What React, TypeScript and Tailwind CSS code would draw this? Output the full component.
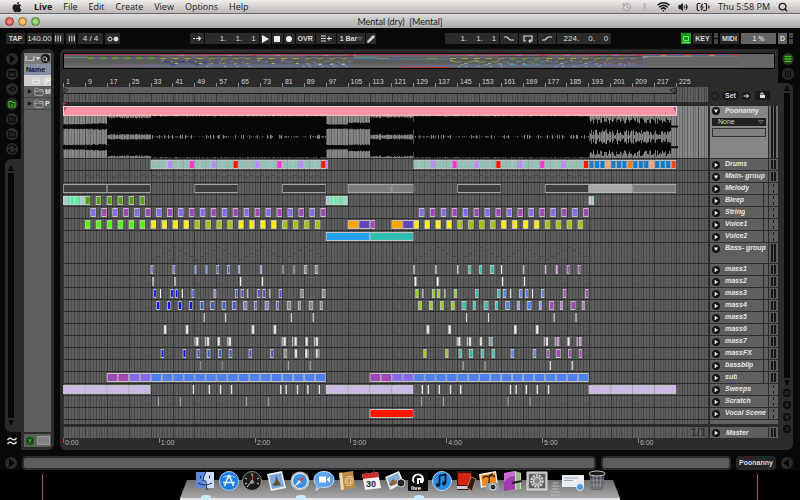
import type { ReactNode } from "react";
import { FaApple } from "react-icons/fa";
import {
  BatteryCharging,
  Bluetooth,
  FolderClosed,
  History,
  Pencil,
  Search,
  Volume2,
  Wifi,
} from "lucide-react";

// [start bar, length in bars, fill, outline]
type Clip = [number, number, string, string?];

type Track = {
  name: string;
  clips: Clip[];
  kind?: "group" | "child";
  mono?: boolean;
  ghost?: number;
};

const BARS = 235.6;
const LANE_W = 645;
const PX = LANE_W / BARS;

const TEAL = "#8cc2b8";
const VIOLET = "#866cec";
const PURPLE = "#a049b6";
const YELLOW = "#fff000";
const OLIVE = "#a9c000";
const BLUE = "#5181ee";
const NAVY = "#0a14f0";
const STEEL = "#3c5fb8";
const GREEN = "#93d11e";
const AQUA = "#35bfb0";
const WHITE = "#f4f4f4";
const GREY = "#8a8a8a";
const LAVENDER = "#cab9e5";

const every = (
  from: number,
  to: number,
  step: number,
  len: number,
  fills: string[],
  outline?: string,
): Clip[] => {
  const out: Clip[] = [];
  for (let b = from, i = 0; b < to; b += step, i++) {
    out.push([b, len, fills[i % fills.length], outline]);
  }
  return out;
};

const at = (fill: string, len: number, ...starts: number[]): Clip[] =>
  starts.map((s) => [s, len, fill]);

const drumLoop = [
  TEAL, TEAL, TEAL, "#b58cff",
  TEAL, TEAL, TEAL, "#ff33d6",
  TEAL, TEAL, TEAL, "#b58cff",
  TEAL, TEAL, TEAL, "#ff1700",
];
const DB = "#157bc8";
const drumEnd = [
  DB, DB, DB, "#ffa670", DB, DB, DB, "#ff7a00",
  DB, DB, DB, "#ffa670", DB, DB, DB, "#e94a1b",
];
const mint = ["#b9bfe6", "#8fd8c0", "#6feeb0", "#48f09a", "#5cf0a6", "#3ff090"];
const MINT_EDGE = "#c4f7e0";

const tracks: Track[] = [
  {
    name: "Drums",
    clips: [
      ...every(32, 96, 2, 2, drumLoop),
      [96, 0.8, "#b58cff"],
      ...every(128, 192, 2, 2, drumLoop),
      ...every(192, 224, 2, 2, drumEnd),
    ],
  },
  { name: "Main- group", clips: [], kind: "group", ghost: 12 },
  {
    name: "Melody",
    kind: "child",
    mono: true,
    clips: [
      ...[0, 16, 48, 80, 144, 176].map((b): Clip => [b, 16, "#3e3e3e", "#b0b0b0"]),
      [104, 16, "#7d7d7d", "#b4b4b4"],
      [120, 8, "#7d7d7d", "#b4b4b4"],
      [192, 16, "#a9a9a9", "#c8c8c8"],
      [208, 16, "#7d7d7d", "#b4b4b4"],
    ],
  },
  {
    name: "Bleep",
    kind: "child",
    mono: true,
    clips: [
      ...every(0, 8, 1, 1, mint, MINT_EDGE),
      ...every(8, 32, 4, 1.9, ["#5a9f08"]),
      ...every(96, 104, 1, 1, mint, MINT_EDGE),
      [192, 1, "#cdd3ee"],
      [193, 1, "#a4cfc0"],
    ],
  },
  {
    name: "String",
    kind: "child",
    mono: true,
    clips: [
      ...every(10, 96, 4, 2, [VIOLET, PURPLE]),
      ...every(130, 192, 4, 2, [VIOLET, PURPLE]),
    ],
  },
  {
    name: "Voice1",
    kind: "child",
    mono: true,
    clips: [
      ...every(8, 32, 4, 2, ["#50ff00"]),
      ...every(32, 48, 4, 2, [YELLOW]),
      ...every(48, 64, 4, 2, [OLIVE]),
      ...every(64, 80, 4, 2, [YELLOW]),
      ...every(80, 96, 4, 2, [OLIVE]),
      [104, 4, "#ffa400"],
      [108, 4, "#5f46b4"],
      [112, 2, PURPLE],
      [120, 4, "#ffa400"],
      [124, 4, "#5f46b4"],
      ...every(128, 144, 4, 2, [YELLOW]),
      ...every(144, 160, 4, 2, [OLIVE]),
      ...every(160, 176, 4, 2, [YELLOW]),
      ...every(176, 192, 4, 2, [OLIVE]),
    ],
  },
  {
    name: "Voice2",
    kind: "child",
    mono: true,
    clips: [
      [96, 16, "#24a3f5"],
      [112, 16, "#30beb1"],
    ],
  },
  { name: "Bass- group", clips: [], kind: "group", ghost: 21 },
  {
    name: "mass1",
    kind: "child",
    clips: [
      ...at("#6a66d8", 1, 32, 40),
      ...at("#8fa3d6", 0.8, 48, 52),
      ...at(STEEL, 1, 56, 60),
      ...at("#b7aede", 0.7, 64, 72),
      ...at(GREY, 0.8, 80, 84),
      ...at(GREY, 1.2, 88, 92),
      ...at(WHITE, 0.4, 128, 136, 144, 160),
      ...at(AQUA, 1.1, 148, 152),
      ...at(AQUA, 1.5, 156),
      ...at("#c0c0c0", 0.5, 168, 176),
      ...at("#d9a9e0", 0.7, 180),
      ...at(PURPLE, 1, 184, 188),
    ],
  },
  {
    name: "mass2",
    kind: "child",
    clips: [
      ...at("#c4c4c4", 0.6, 32.6, 40.6),
      ...at(WHITE, 0.5, 64.6, 72.6, 160.3, 168.3),
      ...at(WHITE, 0.7, 128.4, 136.5),
    ],
  },
  {
    name: "mass3",
    kind: "child",
    clips: [
      ...at(NAVY, 1.1, 33, 39.2, 40.9),
      ...at("#4a4ee0", 1, 47),
      ...at("#7a8fc8", 1, 55),
      ...at(WHITE, 0.4, 35.4, 43.4, 163.3, 171.3),
      ...at(STEEL, 1.1, 62.8),
      ...at("#5b46c4", 1.2, 64.9, 70.9, 72.8, 78.8),
      ...at("#b4b4b4", 0.6, 67.1, 75.2, 131.1, 139.2),
      ...at(GREY, 1.3, 86.7, 94.6),
      ...at(GREEN, 1.2, 128.7, 134.8, 136.6, 142.8),
      ...at(AQUA, 1.3, 150.5, 158.5),
      ...at(BLUE, 1.2, 160.7, 166.6, 168.8, 174.6),
      ...at(PURPLE, 1.2, 182.6, 190.7),
    ],
  },
  {
    name: "mass4",
    kind: "child",
    clips: [
      ...at(NAVY, 1.3, 34, 38, 42, 46),
      ...at(STEEL, 1.5, 50, 53.8, 58, 61.8),
      ...at("#8a7bc8", 1.5, 65.8, 73.7),
      ...at("#6656c0", 1.1, 69.8, 77.8),
      ...at(GREY, 1.5, 81.8, 89.8),
      ...at(GREY, 1.1, 85.8, 93.8),
      ...at(GREEN, 1.4, 129.7, 133.7, 137.7, 141.7),
      ...at(AQUA, 1.7, 145.6, 153.7),
      ...at(AQUA, 1.1, 149.7, 157.8),
      ...at(BLUE, 1.7, 161.5, 169.4),
      ...at("#7f9fe8", 1.1, 165.8, 173.8),
      ...at(PURPLE, 1.8, 177.5, 185.4),
      ...at("#b070c0", 1.1, 181.5, 189.5),
    ],
  },
  {
    name: "mass5",
    kind: "child",
    clips: at("#e0e0e0", 0.4, 51.4, 59.2, 83.2, 91.2, 147.2, 155.2, 179.2, 187.2),
  },
  {
    name: "mass6",
    kind: "child",
    clips: at(WHITE, 1, 36.8, 44.8, 68.9, 76.9, 132.8, 140.7, 164.7, 172.7),
  },
  {
    name: "mass7",
    kind: "child",
    clips: [
      ...at("#c4c4c4", 0.4, 48, 51.8, 60, 79.9, 83.7, 91.7, 143.8, 147.5, 155.5, 175.6, 179.6, 187.6),
      ...at(WHITE, 0.9, 48.6, 52.5, 56.4, 60.5, 80.5, 84.5, 88.5, 92.3, 144.3, 148.2, 152.2, 176.3, 184.2),
      ...at(AQUA, 0.9, 156.1),
      ...at("#c887d4", 1, 180.3, 188.4),
    ],
  },
  {
    name: "massFX",
    kind: "child",
    clips: [
      ...at(NAVY, 1.2, 35.7, 43.7),
      ...at(STEEL, 1.3, 48.8, 52.5, 56.6, 60.5),
      ...at("#6a48c8", 1.2, 67.8, 75.7),
      ...at(GREY, 1.3, 80.6),
      ...at(WHITE, 0.9, 84.6, 88.4, 92.3),
      ...at(GREY, 0.8, 89.1, 93),
      ...at(GREEN, 1.2, 131.6, 139.6),
      ...at(AQUA, 1.2, 144.5, 152.6, 156.6),
      ...at(AQUA, 1.6, 148.2),
      ...at(BLUE, 1.2, 163.5, 171.6),
      ...at(PURPLE, 1.2, 176.6, 184.5, 188.4),
      ...at(PURPLE, 1.8, 180),
    ],
  },
  {
    name: "bassblip",
    kind: "child",
    clips: [
      ...at("#8c8c8c", 0.4, 50, 58),
      ...at("#b8b8b8", 0.3, 82.1, 90.1, 146, 154),
      ...at(WHITE, 0.4, 177.8, 185.8),
    ],
  },
  {
    name: "sub",
    kind: "child",
    clips: [
      ...every(16, 32, 4, 4, [PURPLE, PURPLE, VIOLET, VIOLET]),
      ...every(32, 96, 4, 4, [BLUE]),
      ...every(112, 128, 4, 4, [PURPLE, PURPLE, VIOLET, VIOLET]),
      ...every(128, 192, 4, 4, [BLUE]),
    ],
  },
  {
    name: "Sweeps",
    mono: true,
    clips: [
      ...every(0, 32, 8, 8, [LAVENDER]),
      ...at("#e6e6e6", 0.5, 47.4, 53.2, 57.3, 61.3, 79.3, 81.3, 85.4, 89.2, 93.4),
      ...every(96, 128, 8, 8, [LAVENDER]),
      ...at("#e6e6e6", 0.5, 131, 133.2, 137.2, 141.3, 145, 163.2, 165.3, 169, 173, 177.1),
      ...every(192, 224, 8, 8, [LAVENDER]),
    ],
  },
  {
    name: "Scratch",
    mono: true,
    clips: at("#a2a2a2", 0.4, 34.7, 42.7, 66.8, 74.8, 130.8, 138.8, 162.4, 170.4),
  },
  { name: "Vocal Scene", mono: true, clips: [[112, 16, "#ff1500"]] },
];

const gridPath = (h: number, step: number) => {
  let d = "";
  for (let b = 0; b < BARS; b += step) {
    d += `M${Math.round(b * PX) + 0.5} 0V${h}`;
  }
  return d;
};

function Grid({ h, light = false }: { h: number; light?: boolean }) {
  return (
    <g fill="none">
      <rect width={LANE_W} height={h} fill={light ? "#868686" : "#5e5e5e"} />
      <path d={gridPath(h, 1)} stroke={light ? "#727272" : "#4e4e4e"} />
      <path d={gridPath(h, 2)} stroke={light ? "#626262" : "#474747"} />
      <path d={gridPath(h, 8)} stroke={light ? "#4c4c4c" : "#373737"} />
    </g>
  );
}

function ClipShape({ clip }: { clip: Clip }) {
  const [start, len, fill, outline = "#d4d4d4"] = clip;
  const x = start * PX;
  const w = Math.max(len * PX, 1);
  if (w < 2.4) return <rect x={x} y={1} width={w} height={9} fill={fill} />;
  return (
    <>
      <rect x={x} y={1} width={w} height={9} fill={outline} fillOpacity={0.85} />
      <rect x={x + 0.8} y={2} width={w - 1.3} height={7} fill={fill} />
    </>
  );
}

// dim preview of what the folded tracks hold
function Ghost({ h }: { h: number }) {
  const marks = [];
  for (let b = h > 12 ? 32 : 8; b < 192; b += 2) {
    if (b >= 96 && b < 128) continue;
    const y = h > 12 ? 4 + Math.abs(((b / 2) % 8) - 4) * 3 : 4 + ((b / 2) % 2) * 2;
    marks.push(<rect key={b} x={b * PX} y={y} width={4} height={1} />);
  }
  return <g fill="#454545">{marks}</g>;
}

function Lane({ track }: { track: Track }) {
  const h = track.ghost ? track.ghost - 1 : 11;
  return (
    <svg
      viewBox={`0 0 ${LANE_W} ${h}`}
      preserveAspectRatio="none"
      className="block h-full w-full"
      aria-hidden="true"
    >
      <Grid h={h} />
      {track.ghost && <Ghost h={track.ghost} />}
      {track.clips.map((c, i) => (
        <ClipShape key={i} clip={c} />
      ))}
    </svg>
  );
}

const noise = (i: number) => {
  const v = Math.sin(i * 12.9898) * 43758.5453;
  return v - Math.floor(v);
};

// [inner, outer] half-height of the audio at a bar
const loudness = (bar: number, n: number, m: number): [number, number] => {
  if (bar < 8) return [2 + n * 0.6, 2 + n * 0.6];
  if (bar < 16) return [2 + n * 1.4, 2.5 + n];
  if (bar < 32) return [7.6 + n * 1.4, 8.4 + n * 1.6];
  if (bar < 96) return [n > 0.86 ? 8.6 : 9.8 + m, 10.2 + n * 0.8];
  if (bar < 104) return [2 + n * 0.4, 2 + n * 0.4];
  if (bar < 112) return [2 + n, 3.4 + n];
  if (bar < 127.6) return [7.4 + n * 1.6, 8.4 + n * 1.6];
  if (bar < 128) return [3, 5];
  if (bar < 192) return [n > 0.86 ? 8.6 : 9.8 + m, 10.2 + n * 0.8];
  if (bar < 222) return [3 + n * 6, 3 + m * 6];
  return [1, 1];
};

function Waveform() {
  let d = "";
  for (let x = 0; x < 224.5 * PX; x++) {
    const [inner, outer] = loudness(x / PX, noise(x), noise(x + 900));
    d += `M${x + 0.5} ${(21 - outer).toFixed(1)}V${(21 + inner).toFixed(1)}`;
    d += `M${x + 0.5} ${(42 - inner).toFixed(1)}V${(42 + outer).toFixed(1)}`;
  }
  return (
    <svg
      viewBox={`0 0 ${LANE_W} 53`}
      preserveAspectRatio="none"
      className="block h-full w-full"
      aria-hidden="true"
    >
      <Grid h={53} light />
      <path d={d} stroke="#050505" />
      <rect x={0} y={0} width={614} height={10} fill="#e9d3d6" />
      <rect x={1} y={1} width={612} height={8} fill="#fd92a4" />
      <path d="M1 1h3l-3 5zM613 1h-3l3 5z" fill="#a8606c" />
    </svg>
  );
}

function Overview() {
  return (
    <svg
      viewBox={`0 0 ${BARS} 26`}
      preserveAspectRatio="none"
      className="block h-[16px] w-full border border-black bg-[#666]"
      aria-hidden="true"
    >
      <rect width={224} height={1.6} fill="#b4465a" />
      <rect y={4} x={0} width={192} height={14} fill="#5b5b5b" />
      {tracks.map((t, row) => (
        <g key={t.name} opacity={0.65}>
          {t.clips.map(([s, l, fill], i) => (
            <rect
              key={i}
              x={s}
              y={1.6 + row * 1.15}
              width={l}
              height={1.5}
              fill={fill === TEAL || fill === LAVENDER ? "#777" : fill}
            />
          ))}
        </g>
      ))}
    </svg>
  );
}

function Fold({ open = false, label }: { open?: boolean; label: string }) {
  return (
    <button
      type="button"
      aria-label={label}
      className="flex size-[8px] shrink-0 items-center justify-center rounded-full bg-[#141414]"
    >
      <svg viewBox="0 0 8 8" className="size-[8px]" fill="#ececec">
        <path d={open ? "M1.8 2.5h4.4L4 6z" : "M2.7 1.8v4.4L6.2 4z"} />
      </svg>
    </button>
  );
}

function Meter({ mono = false }: { mono?: boolean }) {
  return (
    <div className="flex w-[9px] shrink-0 justify-center gap-px bg-[#5d5d5d] py-px">
      {mono ? (
        <div className="w-px border-l border-dashed border-[#1c1c1c]" />
      ) : (
        <>
          <div className="w-[2px] bg-[#161616]" />
          <div className="w-[2px] bg-[#161616]" />
        </>
      )}
    </div>
  );
}

const trackName = "truncate text-[7px] leading-[10px] font-bold italic text-[#e4e4e4]";

function TrackRow({ track }: { track: Track }) {
  const tall = track.name === "Bass- group";
  return (
    <div className={`flex gap-[2px] ${tall ? "h-[21px]" : "h-[12px]"}`}>
      <div className="min-w-0 flex-1 border-b border-[#2d2d2d]">
        <Lane track={track} />
      </div>
      <div className="flex w-[68px] shrink-0 gap-px border-b border-[#2d2d2d] bg-[#2d2d2d]">
        <div className={`flex min-w-0 flex-1 ${track.kind ? "bg-[#5f5f5f]" : ""}`}>
          <div
            className={`flex min-w-0 flex-1 items-start gap-[5px] bg-[#5f5f5f] pl-[2px] ${
              track.kind === "child" ? "mr-[4px] border-r border-[#2d2d2d]" : ""
            }`}
          >
            <div className="pt-[2px]">
              <Fold open={track.kind === "group"} label={`Unfold ${track.name}`} />
            </div>
            <span className={trackName}>{track.name}</span>
          </div>
        </div>
        <Meter mono={track.mono} />
      </div>
    </div>
  );
}

const box =
  "flex h-[11px] items-center justify-center bg-[#2a2a2a] text-[7px] leading-none font-bold text-[#d8d8d8]";

function Lamp() {
  return (
    <div className="flex w-[4px] flex-col justify-between">
      <div className="h-[5px] bg-[#454545]" />
      <div className="h-[5px] bg-[#454545]" />
    </div>
  );
}

function Glyph({ d, label, w = "w-[18px]" }: { d: string; label: string; w?: string }) {
  return (
    <button type="button" aria-label={label} className={`${box} ${w}`}>
      <svg viewBox="0 0 12 9" className="h-[9px] w-[12px]" fill="none" stroke="#dedede" strokeWidth="1.2">
        <path d={d} />
      </svg>
    </button>
  );
}

function Position({ value }: { value: string[] }) {
  return (
    <div className={`${box} w-[54px] justify-end gap-[9px] pr-[3px] text-[8px] font-normal`}>
      {value.map((v, i) => (
        <span key={i}>{v}</span>
      ))}
    </div>
  );
}

function Chevron() {
  return (
    <svg
      viewBox="0 0 6 4"
      className="pointer-events-none absolute top-1/2 right-[2px] h-[4px] w-[6px] -translate-y-1/2"
      fill="none"
      stroke="#6a6a6a"
      aria-hidden="true"
    >
      <path d="M.5 .5h5L3 3.500z" />
    </svg>
  );
}

function Transport() {
  return (
    <div className="flex h-[21px] shrink-0 items-center justify-between pr-[7px] pl-[6px]">
      <div className="flex gap-[2px]">
        <button type="button" className={`${box} w-[19px]`}>TAP</button>
        <div className={`${box} w-[25px] text-[8px] font-normal`}>140.00</div>
        <Glyph d="M2 1v7M5 1v7M8 1v7" label="Nudge down" w="w-[10px]" />
        <Glyph d="M4 1v7M7 1v7M10 1v7" label="Nudge up" w="w-[10px]" />
        <div className={`${box} w-[25px] text-[8px] font-normal`}>4 / 4</div>
        <button type="button" aria-label="Metronome" className={`${box} w-[15px]`}>
          <svg viewBox="0 0 14 8" className="h-[8px] w-[14px]" stroke="#e2e2e2">
            <circle cx="4" cy="4" r="2" fill="none" />
            <circle cx="10" cy="4" r="2" fill="#e2e2e2" />
          </svg>
        </button>
      </div>
      <div className="flex gap-px">
        <Glyph d="M2 4.500h2M5 4.500h4M7.500 2.500l2 2l-2 2" label="Follow" w="w-[14px]" />
        <Position value={["1.", "1.", "1"]} />
        <button type="button" aria-label="Play" className={`${box} w-[11px]`}>
          <svg viewBox="0 0 8 8" className="size-[8px]" fill="#ececec"><path d="M1 0l7 4l-7 4z" /></svg>
        </button>
        <button type="button" aria-label="Stop" className={`${box} w-[11px]`}>
          <svg viewBox="0 0 8 8" className="size-[8px]" fill="#ececec"><path d="M1 1h6v6H1z" /></svg>
        </button>
        <button type="button" aria-label="Record" className={`${box} w-[11px]`}>
          <svg viewBox="0 0 8 8" className="size-[8px]" fill="#ececec"><circle cx="4" cy="4" r="3" /></svg>
        </button>
        <button type="button" className={`${box} w-[19px]`}>OVR</button>
        <Glyph d="M1 2h5M1 4.500h5M1 7h5M7 4.500h5M9 2.500v4" label="Back to arrangement" w="w-[20px]" />
        <div className="relative">
          <select aria-label="Quantize" className={`${box} w-[28px] appearance-none pl-[3px]`} defaultValue="1 Bar">
            <option>1 Bar</option>
          </select>
          <Chevron />
        </div>
        <button type="button" aria-label="Draw" className={`${box} w-[10px]`}>
          <Pencil size={8} strokeWidth={3} fill="#d8d8d8" />
        </button>
      </div>
      <div className="flex gap-px">
        <Position value={["1.", "1.", "1"]} />
        <Glyph d="M1 3h3l3 3h4" label="Punch in" />
        <Glyph d="M4 7H2V2h8v5H7M8.500 5.500L7 7l1.500 1.500" label="Loop" />
        <Glyph d="M1 6h3l3-3h4" label="Punch out" />
        <Position value={["224.", "0.", "0"]} />
      </div>
      <div className="flex gap-[2px]">
        <button type="button" aria-label="Computer keyboard" className="flex h-[11px] w-[10px] items-center justify-center bg-[#0f9c12]">
          <svg viewBox="0 0 8 8" className="size-[8px]" fill="none" stroke="#7fe07c"><path d="M1.500 1.500h5v4h-5zM0 7.500h8" /></svg>
        </button>
        <button type="button" className={`${box} w-[19px]`}>KEY</button>
        <Lamp />
        <button type="button" className={`${box} w-[19px]`}>MIDI</button>
        <div className={`${box} w-[35px] bg-[#626262]`}>1 %</div>
        <div className={`${box} w-[9px] bg-[#626262]`}>D</div>
        <Lamp />
      </div>
    </div>
  );
}

const menus = ["File", "Edit", "Create", "View", "Options", "Help"];

function MenuBar() {
  return (
    <header className="flex h-[13px] shrink-0 items-center justify-between bg-linear-to-b from-[#f0eeed] to-[#bcb7b5] pr-[12px] pl-[11px] font-['Open_Sans',sans-serif] text-[9px] leading-none text-[#1c1c1c]">
      <nav className="flex items-center gap-[11px]">
        <FaApple size={12} />
        <b>Live</b>
        {menus.map((m) => (
          <button type="button" key={m}>{m}</button>
        ))}
      </nav>
      <div className="flex items-center gap-[8px]">
        <History size={10} className="text-[#9a9a9a]" />
        <Bluetooth size={9} className="text-[#a8a8a8]" />
        <Wifi size={13} strokeWidth={3} />
        <Volume2 size={10} fill="#1c1c1c" />
        <BatteryCharging size={14} />
        <span>Thu 5:58 PM</span>
        <Search size={10} strokeWidth={3} />
      </div>
    </header>
  );
}

function TitleBar() {
  return (
    <div className="flex h-[15px] shrink-0 items-center border-t border-[#6a6a6a] bg-linear-to-b from-[#dcdcdc] to-[#a9a9a9] px-[5px] font-['Lato',sans-serif]">
      <div className="flex w-[36px] gap-[4px]">
        <div className="size-[9px] rounded-full border border-[#8a3a35] bg-radial from-[#ff9a90] to-[#d8332c]" />
        <div className="size-[9px] rounded-full border border-[#96682a] bg-radial from-[#ffd890] to-[#e8942a]" />
        <div className="size-[9px] rounded-full border border-[#4f7a35] bg-radial from-[#bdec9a] to-[#5ea63c]" />
      </div>
      <h1 className="flex-1 text-center text-[9px] leading-none whitespace-pre text-[#1e1e1e]">
        Mental (dry)  [Mental]
      </h1>
      <div className="w-[36px]" />
    </div>
  );
}

function Round({ children, label, on = false }: { children: ReactNode; label: string; on?: boolean }) {
  return (
    <button
      type="button"
      aria-label={label}
      className={`flex size-[12px] items-center justify-center rounded-full bg-[#2b2b2b] ${on ? "text-[#35c41a]" : "text-[#050505]"}`}
    >
      <svg viewBox="0 0 12 12" className="size-[12px]" fill="none" stroke="currentColor" strokeWidth="1.2">
        {children}
      </svg>
    </button>
  );
}

const folderPath = "M3 3.500h2.500l1 1H9v4.500H3z";

function Browser() {
  return (
    <div className="flex shrink-0">
      <div className="flex w-[21px] flex-col">
        <div className="flex flex-col items-center gap-[3px] pt-[4px] pb-[4px] pl-[3px]">
          <Round label="Live devices"><path d="M4.500 3v6l4-3z" fill="currentColor" /></Round>
          <Round label="Sets"><path d="M3 3.500h6v5H3zM3 5h6" /></Round>
          <Round label="Plug-ins"><path d="M2 6h3M5 4v4h2l2-1V5L7 4zM9 6h1" /></Round>
          <Round label="Folder 1" on><path d={folderPath} /><path d="M6 6v2" /></Round>
          <Round label="Folder 2"><path d={folderPath} /><path d="M5.500 6h1v2h-1" /></Round>
          <Round label="Folder 3"><path d={folderPath} /><path d="M5 6.500h2" /></Round>
          <Round label="Hot swap"><path d="M3 5a3 3 0 0 1 6 0M9 7a3 3 0 0 1-6 0M9 3v2H7M3 9V7h2" /></Round>
        </div>
        <div className="ml-[5px] flex flex-1 flex-col items-center gap-[2px] rounded-l-md bg-[#2b2b2b] py-[6px] pr-[4px]">
          <svg viewBox="0 0 6 6" className="size-[6px]" fill="#080808"><path d="M3 0l3 6H0z" /></svg>
          <div className="w-[6px] flex-1 bg-[#080808]" />
          <svg viewBox="0 0 6 6" className="size-[6px]" fill="#080808"><path d="M3 6l3-6H0z" /></svg>
        </div>
        <div className="flex h-[18px] items-center justify-center pl-[3px]">
          <svg viewBox="0 0 12 12" className="size-[12px]" fill="none" stroke="#d8d8d8" strokeWidth="1.5">
            <path d="M1.500 5q2-3 4.500-1t4.500-1M1.500 9q2-3 4.500-1t4.500-1" />
          </svg>
        </div>
      </div>
      <div className="flex w-[33px] flex-col gap-[2px] rounded-r-md rounded-tl-md bg-[#2b2b2b] px-[3px] pt-[4px] pb-[3px]">
        <div className="flex flex-1 flex-col bg-[#5e5e5e] text-[7px] leading-none font-bold">
          <div className="flex h-[11px] items-center justify-between bg-[#7a7a7a] px-px text-[#e8e8e8]">
            <span>/.../</span>
            <svg viewBox="0 0 4 3" className="h-[3px] w-[4px]" fill="#e8e8e8"><path d="M0 0h4L2 3z" /></svg>
            <span className="flex size-[9px] items-center justify-center rounded-full bg-[#151515]">
              <Search size={6} strokeWidth={3} />
            </span>
          </div>
          <div className="flex h-[11px] items-center bg-[#85919f] pl-[2px] text-[#111]">Name</div>
          <div className="flex h-[11px] items-center justify-end gap-[4px] bg-[#cfcfcf] text-[#f5f5f5]">
            <FolderClosed size={8} />
            (P
          </div>
          {["M", "P"].map((n) => (
            <div key={n} className="flex h-[12px] items-center justify-between overflow-hidden border-b border-[#484848] pl-[3px] text-[#e0e0e0]">
              <svg viewBox="0 0 6 6" className="size-[5px]" fill="#1a1a1a"><path d="M1 0v6l5-3z" /></svg>
              <FolderClosed size={10} className="text-[#b4b4b4]" />
              <span className="w-[6px]">{n}</span>
            </div>
          ))}
        </div>
        <div className="flex h-[13px] items-center gap-[2px] bg-[#5e5e5e] px-px">
          <svg viewBox="0 0 10 10" className="size-[10px]" stroke="#0d6e08" fill="#1b3b16">
            <circle cx="5" cy="5" r="4" />
            <path d="M5 2.500v5M3.500 3.500l1.500 1.500l1.500-1.500" stroke="#3fc52c" />
          </svg>
          <div className="h-[9px] flex-1 border border-[#9a9a9a] bg-[#808080]" />
        </div>
      </div>
    </div>
  );
}

function StripGrid({ h }: { h: number }) {
  return (
    <svg viewBox={`0 0 ${LANE_W} ${h}`} preserveAspectRatio="none" className="block h-full w-full" aria-hidden="true">
      <Grid h={h} />
    </svg>
  );
}

const barNumbers = Array.from({ length: 29 }, (_, i) => 1 + i * 8);
const minutes = ["0:00", "1:00", "2:00", "3:00", "4:00", "5:00", "6:00"];

function Arrangement() {
  return (
    <main className="flex min-w-0 flex-1 flex-col rounded-l-md bg-[#2b2b2b] pt-[4px] pl-[3px]">
      <div className="pr-[3px]">
        <Overview />
      </div>
      <div className="mt-[7px] flex gap-[2px]">
        <div className="min-w-0 flex-1">
          <div className="flex h-[11px] overflow-hidden text-[7px] leading-[11px] text-[#d0d0d0]">
            {barNumbers.map((n) => (
              <div key={n} className="flex shrink-0 items-end" style={{ width: `${(800 / BARS).toFixed(3)}%` }}>
                <span className="h-[4px] border-l border-[#8a8a8a] pl-[2px]" />
                <span>{n}</span>
              </div>
            ))}
          </div>
          <div className="h-[15px]">
            <svg viewBox={`0 0 ${LANE_W} 15`} preserveAspectRatio="none" className="block h-full w-full" aria-hidden="true">
              <Grid h={15} />
              <rect width={613} height={6} fill="#5f5f5f" />
              <path d="M0 6.500H613M613.500 0v6" stroke="#1d1d1d" />
              <path d="M1 1l4 2l-4 3zM612 1l-5 2l5 3z" fill="none" stroke="#222" />
            </svg>
          </div>
          <div className="h-[4px]">
            <svg viewBox="0 0 4 4" className="block size-[4px]" fill="#ff2440"><path d="M0 1h3l-3 3z" /></svg>
          </div>
        </div>
        <div className="flex w-[68px] shrink-0 items-center gap-[3px] pt-[9px] pl-px text-[7px] leading-none font-bold text-[#d8d8d8]">
          <button type="button" aria-label="Previous locator" className="size-[8px] rounded-full border border-[#151515]" />
          <button type="button" className="h-[9px] w-[17px] rounded-full bg-[#1a1a1a]">Set</button>
          <button type="button" aria-label="Next locator" className="flex size-[8px] items-center justify-center rounded-full bg-[#161616]">
            <svg viewBox="0 0 8 8" className="size-[8px]" stroke="#f0f0f0" fill="none"><path d="M1.500 4h5M4.500 2l2 2l-2 2" /></svg>
          </button>
          <button type="button" aria-label="Lock envelopes" className="ml-[2px] flex h-[9px] w-[15px] items-center justify-center bg-[#191919]">
            <svg viewBox="0 0 7 7" className="size-[7px]" fill="#e2e2e2"><path d="M1 3h5v3H1z" /><path d="M2 3V1h2v2" fill="none" stroke="#e2e2e2" /></svg>
          </button>
        </div>
      </div>

      <div className="flex h-[53px] gap-[2px]">
        <div className="min-w-0 flex-1 border-b border-[#2d2d2d]">
          <Waveform />
        </div>
        <div className="flex w-[68px] shrink-0 gap-px border-b border-[#2d2d2d]">
          <div className="flex min-w-0 flex-1 flex-col gap-[2px] bg-[#878787] px-[2px]">
            <div className="flex items-center gap-[5px]">
              <Fold open label="Fold Poonanny" />
              <span className={trackName}>Poonanny</span>
            </div>
            <div className="relative">
              <select
                aria-label="Device"
                defaultValue="None"
                className="block h-[8px] w-full appearance-none bg-[#202020] pl-[6px] text-[7px] leading-[8px] text-[#d8d8d8]"
              >
                <option>None</option>
              </select>
              <Chevron />
            </div>
            <input aria-label="Parameter" className="h-[9px] w-full border border-[#333] bg-[#7f7f7f] text-[7px]" />
          </div>
          <div className="flex w-[9px] shrink-0 justify-center gap-px bg-[#6a6a6a]">
            <div className="w-[2px] bg-[#161616]" />
            <div className="w-[2px] bg-[#161616]" />
          </div>
        </div>
      </div>

      {tracks.map((t) => (
        <TrackRow key={t.name} track={t} />
      ))}

      <div className="flex h-[4px] gap-[2px]">
        <div className="min-w-0 flex-1"><StripGrid h={4} /></div>
        <div className="w-[68px] shrink-0 bg-[#5f5f5f]" />
      </div>
      <div className="mt-[3px] flex h-[11px] gap-[2px]">
        <div className="relative min-w-0 flex-1">
          <StripGrid h={11} />
          <span className="absolute right-[2px] bottom-0 text-[11px] leading-[11px] text-[#262626]">1/1</span>
        </div>
        <div className="flex w-[68px] shrink-0 gap-px">
          <div className="flex min-w-0 flex-1 items-center gap-[6px] bg-[#5f5f5f] pl-[2px]">
            <Fold label="Unfold Master" />
            <span className={trackName}>Master</span>
          </div>
          <Meter />
        </div>
      </div>
      <div className="mr-[70px] flex h-[11px] overflow-hidden text-[7px] leading-[10px] text-[#b4b4b4]">
        {minutes.map((m) => (
          <div key={m} className="flex shrink-0" style={{ width: `${(3500 / BARS).toFixed(3)}%` }}>
            <span className={`h-[5px] border-l pl-px ${m === "0:00" ? "border-[#ff2440]" : "border-[#8a8a8a]"}`} />
            <span>{m}</span>
          </div>
        ))}
      </div>
    </main>
  );
}

function RightRail() {
  return (
    <div className="mr-[7px] flex w-[15px] shrink-0 flex-col">
      <div className="flex flex-col items-center gap-[3px] pt-[4px] pb-[3px] pl-[4px]">
        <Round label="Arrangement view" on><path d="M2.500 3.500h7M2.500 6h7M2.500 8.500h7" strokeWidth="1.600" /></Round>
        <Round label="Session view"><path d="M3.500 2.500v7M6 2.500v7M8.500 2.500v7" /></Round>
      </div>
      <div className="flex flex-1 flex-col items-center gap-[2px] rounded-tr-md rounded-br-md bg-[#2b2b2b] pt-[2px] pb-[17px] pl-[3px]">
        <svg viewBox="0 0 6 6" className="size-[6px]" fill="#080808"><path d="M3 0l3 6H0z" /></svg>
        <div className="w-[6px] flex-1 bg-[#080808]" />
        <svg viewBox="0 0 6 6" className="size-[6px]" fill="#080808"><path d="M3 6l3-6H0z" /></svg>
        <div className="flex flex-col gap-[4px] pt-px">
          {["IO", "R", "M", "D"].map((l) => (
            <button
              type="button"
              key={l}
              className="flex size-[8px] items-center justify-center rounded-full bg-[#0c0c0c] text-[5px] leading-none text-[#4a4a4a]"
            >
              {l}
            </button>
          ))}
        </div>
      </div>
    </div>
  );
}

function StatusBar() {
  return (
    <footer className="flex h-[15px] shrink-0 items-center gap-[5px] pr-[7px] pl-[5px]">
      <Round label="Show info"><path d="M4.500 3v6l4-3z" fill="currentColor" /></Round>
      <div className="h-[14px] flex-1 rounded-sm border-2 border-[#2b2b2b] bg-[#5d5d5d]" />
      <div className="h-[14px] w-[130px] rounded-sm border-2 border-[#2b2b2b] bg-[#5d5d5d]" />
      <button type="button" className="h-[14px] w-[40px] rounded-sm bg-[#262626] text-[7px] leading-none font-bold text-[#d8d8d8]">
        Poonanny
      </button>
      <Round label="Show detail"><path d="M7.500 3v6l-4-3z" fill="currentColor" /></Round>
    </footer>
  );
}

const dockIcons: { name: string; art: ReactNode }[] = [
  {
    name: "Finder",
    art: (
      <>
        <path d="M2 2h18v16H2z" fill="#5b8ae0" />
        <path d="M12 2h8v16h-8q-1-4-1-6h-2q0-5 3-10z" fill="#cfdcf5" />
        <path d="M13 0q-4 6-4 11h3q0 5 1 9M4 13q7 4 14 0M6.500 5.500v3M15.500 5.500v3" fill="none" stroke="#1b2b55" />
      </>
    ),
  },
  {
    name: "App Store",
    art: (
      <>
        <circle cx="11" cy="11" r="9.500" fill="#1c7fe0" stroke="#a9cdf0" />
        <path d="M4 8a8 6 0 0 1 14 0q-7-3-14 0z" fill="#8cc4f7" />
        <path d="M11 5l-4.500 11M11 5l4.500 11M5 12.500h12" stroke="#f2f8ff" strokeWidth="1.600" />
      </>
    ),
  },
  {
    name: "Dashboard",
    art: (
      <>
        <circle cx="11" cy="11" r="9.500" fill="#1c1c1c" stroke="#8f8f8f" />
        <path d="M11 3v3M4 8l2 1M18 8l-2 1M4 14l2-1M18 14l-2-1M11 11l-5 6" stroke="#cfcfcf" />
        <path d="M11 11l1-6" stroke="#e8432a" />
        <circle cx="11" cy="12" r="2" fill="#9a9a9a" />
      </>
    ),
  },
  {
    name: "Mail",
    art: (
      <>
        <path d="M2 4l15-3l4 17l-15 3z" fill="#f1f1ee" />
        <path d="M4 5.500l12-2.500l3 13.500l-12 2.500z" fill="#79a9de" />
        <path d="M11 5l2 5l3 5l-5 1l-4-1l3-3z" fill="#6b5134" />
      </>
    ),
  },
  {
    name: "Safari",
    art: (
      <>
        <circle cx="11" cy="11" r="9.500" fill="#b7bcc2" />
        <circle cx="11" cy="11" r="7.500" fill="#3d92e0" stroke="#e6eef6" />
        <path d="M17 5l-5 7l-2-2z" fill="#e9402c" />
        <path d="M5 17l5-7l2 2z" fill="#f5f5f5" />
      </>
    ),
  },
  {
    name: "iChat",
    art: (
      <>
        <path d="M11 1.500c6 0 10 3.500 10 8s-4 8-10 8q-2 0-3.500-.5L3 20.500l1-5Q1 13 1 9.500c0-4.500 4-8 10-8z" fill="#5ba3f0" stroke="#c5dffa" />
        <path d="M6 6.500h7v6H6zM14 9l3-2.500v6L14 10z" fill="#fff" />
      </>
    ),
  },
  {
    name: "Address Book",
    art: (
      <>
        <path d="M3 3l14-2l2 17l-14 2z" fill="#c08a48" />
        <path d="M3 3l3-.5l2 17l-3 .5z" fill="#ead9b8" />
        <text x="8" y="14" fontSize="10" fontFamily="Liberation Sans, sans-serif" fill="#f0dcae">@</text>
      </>
    ),
  },
  {
    name: "iCal",
    art: (
      <>
        <path d="M2 4l16-2l3 16l-16 2z" fill="#f5f5f5" />
        <path d="M2 4l16-2l1 5L3 9z" fill="#c9302c" />
        <path d="M6 1v4M14 0v4" stroke="#8a1f1c" />
        <text x="6" y="17" fontSize="9" fontWeight="bold" fontFamily="Liberation Sans, sans-serif" fill="#222">30</text>
      </>
    ),
  },
  {
    name: "Preview",
    art: (
      <>
        <path d="M1 7l14-6l5 12l-14 7z" fill="#efefef" />
        <path d="M3 8l11-5l3.500 8.500l-11 5z" fill="#7fb0de" />
        <path d="M5 14l4-5l3 2l3-2l2 3l-10 4z" fill="#8c6540" />
        <circle cx="17" cy="13" r="4" fill="#262626" stroke="#cfcfcf" />
      </>
    ),
  },
  {
    name: "Live",
    art: (
      <>
        <rect x="1" y="2" width="20" height="19" rx="1" fill="#0c0c0c" />
        <path d="M7 12.500a5 5 0 1 1 8 0M11 14V9h3v4" fill="none" stroke="#fff" strokeWidth="2" />
        <text x="4" y="20" fontSize="6" fontWeight="bold" fontFamily="Liberation Sans, sans-serif" fill="#fff">live</text>
      </>
    ),
  },
  {
    name: "iTunes",
    art: (
      <>
        <circle cx="11" cy="11" r="9.500" fill="#2a8ce4" stroke="#b9d9f5" />
        <path d="M8.500 15V6l6-1.500V13" fill="none" stroke="#0a1a2c" strokeWidth="1.800" />
        <circle cx="7" cy="15" r="2" fill="#0a1a2c" />
        <circle cx="13" cy="13.500" r="2" fill="#0a1a2c" />
      </>
    ),
  },
  {
    name: "Photo Booth",
    art: (
      <>
        <path d="M2 1h15v19H2z" fill="#3a120c" />
        <path d="M3 3h13v12H3z" fill="#d4240f" />
        <path d="M2 16h15v3H2z" fill="#cfcfcf" />
        <path d="M16 7l5 2l-4 12l-5-3z" fill="#2b1d1a" stroke="#c07a60" />
      </>
    ),
  },
  {
    name: "iPhoto",
    art: (
      <>
        <path d="M1 4l17-3l2 13l-17 4z" fill="#f3efe6" />
        <path d="M3 5.500l14-2.500l1.500 10l-14 3.500z" fill="#f08a1c" />
        <path d="M10 15q2-5 1-8M11 7q-4-2-6 1M11 7q4-3 6 0M11 7q1-3 4-3" stroke="#3c2208" fill="none" strokeWidth="1.400" />
        <path d="M8 13h13v8H8z" fill="#8f9ba6" />
        <circle cx="15" cy="17" r="3" fill="#23303c" stroke="#dde3e8" />
      </>
    ),
  },
  {
    name: "Dictionary",
    art: (
      <>
        <path d="M2 3l11-2v18l-11 2z" fill="#a23ab0" />
        <path d="M2 3l11-2v5q-6 0-11 6z" fill="#c46fd0" />
        <path d="M13 1l6 2v16l-6 1z" fill="#cfd9c4" />
        <path d="M15 2v18M17 2.500v17" stroke="#5e9a5a" />
        <path d="M10 13l10-2" stroke="#1e1e1e" strokeWidth="2" />
      </>
    ),
  },
  {
    name: "System Preferences",
    art: (
      <>
        <path d="M1 2h20v18H1z" fill="#b5b5b5" stroke="#e0e0e0" />
        <path d="M3 4h16v14H3z" fill="#5f5f5f" />
        <circle cx="11" cy="11" r="5.500" fill="none" stroke="#d5d5d5" strokeWidth="2.500" strokeDasharray="2 1" />
        <circle cx="11" cy="11" r="3.500" fill="#8c8c8c" stroke="#e2e2e2" />
      </>
    ),
  },
];

function DockIcon({ name, children }: { name: string; children: ReactNode }) {
  return (
    <button type="button" aria-label={name} className="size-[22px] shrink-0">
      <svg viewBox="0 0 22 22" className="size-[22px]">{children}</svg>
    </button>
  );
}

function Dock() {
  return (
    <div className="flex h-[30px] shrink-0 justify-between bg-black px-[42px]">
      <div className="mt-[4px] w-px bg-[#a5612f]" />
      <div className="relative flex w-[440px] items-start pl-[14px]">
        <svg viewBox="0 0 440 20" preserveAspectRatio="none" className="absolute inset-x-0 bottom-0 h-[20px] w-full" aria-hidden="true">
          <defs>
            <linearGradient id="shelf" x1="0" y1="0" x2="0" y2="1">
              <stop offset="0" stopColor="#6e6e6e" />
              <stop offset="1" stopColor="#a8a8a8" />
            </linearGradient>
          </defs>
          <path d="M7 0H433L440 18H0z" fill="url(#shelf)" />
          <path d="M0 18H440V20H0z" fill="#e6e6ea" />
          {[26, 121, 239].map((x) => (
            <ellipse key={x} cx={x} cy={17} rx={5} ry={2} fill="#c8ecff" />
          ))}
          <path d="M373 3h5M372 6h7M372 9h7M371 12h9M371 15h9" stroke="#b8b8b8" />
        </svg>
        <div className="relative flex w-[354px] justify-between">
          {dockIcons.map((i) => (
            <DockIcon key={i.name} name={i.name}>{i.art}</DockIcon>
          ))}
        </div>
        <div className="relative ml-[14px] flex gap-[2px]">
          <DockIcon name="Document">
            <path d="M0 5h22v12H0z" fill="#e9edf2" />
            <path d="M2 8h14M2 10.500h9" stroke="#9aa5b2" />
            <circle cx="18" cy="17" r="3.500" fill="#4d9be0" stroke="#dceaf6" />
          </DockIcon>
          <DockIcon name="Trash">
            <path d="M3 3h16l-2.500 17h-11z" fill="#5c6066" fillOpacity="0.8" />
            <path d="M7 5l1 14M11 5v14M15 5l-1 14M4 10h14M5 15h12" stroke="#9ba0a6" strokeWidth="0.700" />
            <ellipse cx="11" cy="3.500" rx="8" ry="2.500" fill="#1b1b1b" stroke="#c9ccd0" />
          </DockIcon>
        </div>
      </div>
      <div className="mt-[4px] w-px bg-[#a5612f]" />
    </div>
  );
}

export default function App() {
  return (
    <div className="flex min-h-screen w-full flex-col overflow-hidden bg-[#080808] font-['Liberation_Sans',Arial,sans-serif]">
      <MenuBar />
      <TitleBar />
      <Transport />
      <div className="flex flex-1 gap-[6px]">
        <Browser />
        <div className="flex min-w-0 flex-1">
          <Arrangement />
          <RightRail />
        </div>
      </div>
      <div className="pt-[5px]">
        <StatusBar />
      </div>
      <Dock />
    </div>
  );
}
